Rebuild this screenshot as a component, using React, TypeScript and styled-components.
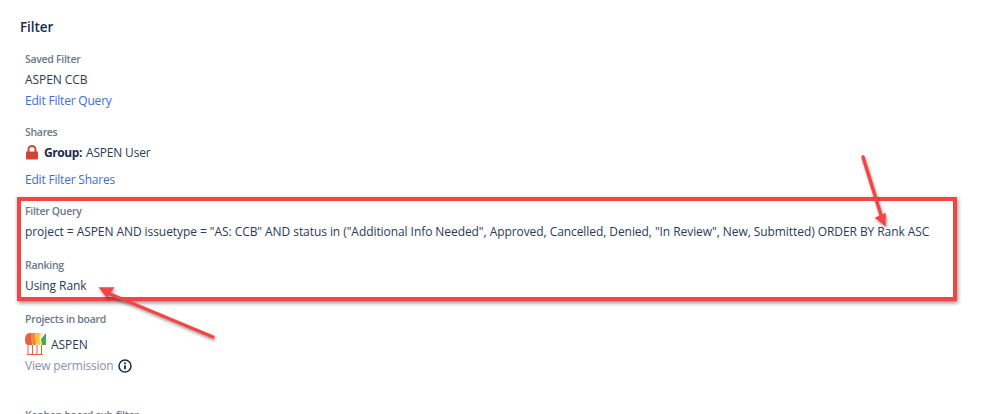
import * as React from 'react';
import styled, { createGlobalStyle } from 'styled-components';

const GlobalStyle = createGlobalStyle`
  html, body {
    background: #fff;
    height: 414px;
    margin: 0;
    overflow: hidden;
  }
`;

const Page = styled.div`
  box-sizing: border-box;
  color: #2b3a55;
  font-family: 'Open Sans', sans-serif;
  font-size: 12px;
  height: 414px;
  letter-spacing: -0.07px;
  overflow: hidden;
  padding: 18px 0 0 20px;
  position: relative;
  width: 998px;
`;

const Title = styled.h3`
  color: #172b4d;
  font-size: 13.5px;
  font-weight: 600;
  line-height: 18px;
  margin: 0 0 16px;
`;

const Section = styled.div<{ $gap?: number }>`
  margin-bottom: ${props => props.$gap ?? 14}px;
  padding-left: 5px;
`;

const Label = styled.div`
  color: #6b778c;
  font-size: 10.5px;
  font-weight: 600;
  letter-spacing: -0.3px;
  line-height: 14px;
  margin-bottom: 3px;
`;

const Value = styled.div`
  line-height: 21px;
`;

const EditLink = styled.a<{ $top?: number }>`
  color: #3b6fd4;
  display: block;
  letter-spacing: -0.2px;
  line-height: 21px;
  margin-top: ${props => props.$top ?? 0}px;
`;

const ShareRow = styled.div`
  align-items: center;
  display: flex;
  gap: 5px;
  letter-spacing: -0.2px;
  line-height: 21px;
`;

const Strong = styled.b`
  color: #172b4d;
  font-weight: 700;
  letter-spacing: -0.4px;
  margin-right: 4px;
`;

const Highlight = styled.div`
  border: 4px solid #f44545;
  box-shadow: 1px 2px 4px rgba(0, 0, 0, 0.45);
  box-sizing: border-box;
  height: 104px;
  margin: 0 0 11px -3px;
  padding: 3px 0 0 4px;
  width: 940px;
`;

const HighlightRow = styled.div`
  margin-bottom: 16px;
`;

const ProjectRow = styled.div`
  align-items: center;
  display: flex;
  gap: 4px;
  height: 24px;
  margin-top: 6px;
`;

const PermissionRow = styled.div`
  align-items: center;
  color: #8a93a3;
  display: flex;
  gap: 4px;
  letter-spacing: -0.2px;
  line-height: 20px;
`;

const Overlay = styled.svg`
  height: 414px;
  left: 0;
  pointer-events: none;
  position: absolute;
  top: 0;
  width: 998px;
`;

const LockIcon = () => (
  <svg width="14" height="15" viewBox="0 0 14 15">
    <path d="M3.500 7 V4.500 a3.500 3.500 0 0 1 7 0 V7" fill="none" stroke="#d04437" strokeWidth="2" />
    <rect x="1" y="6.500" width="12" height="8" rx="1" fill="#d04437" />
  </svg>
);

const ProjectLogo = () => (
  <svg width="22" height="24" viewBox="0 0 22 24">
    <path d="M0 8 C0 3 2 1 5 1 H7 V13 H4 C1 13 0 11 0 8Z" fill="#e8603c" />
    <path d="M6 1 h5 L11 13 H8 C6 11 6 6 6 1Z" fill="#f08a3e" />
    <path d="M10 1 h5 L15 13 H13 C10 11 10 6 10 1Z" fill="#f9c440" />
    <path d="M15 1 h2 C15 5 15 9 17 13 h-2 C14 9 14 5 15 1Z" fill="#f3e27a" />
    <path d="M16 7 L21 1 V13 H17 Z" fill="#4aa84c" />
    <path d="M3 13 V22 M7.500 13 V22 M12 13 V22 M16.500 13 V22 M2 22.500 H18" stroke="#e8603c" strokeWidth="1" fill="none" />
  </svg>
);

const InfoIcon = () => (
  <svg width="14" height="14" viewBox="0 0 14 14">
    <circle cx="7" cy="7" r="6" fill="none" stroke="#172b4d" strokeWidth="1.500" />
    <circle cx="7" cy="4.300" r="1" fill="#172b4d" />
    <path d="M7 6.200 V10.300" stroke="#172b4d" strokeWidth="1.800" />
  </svg>
);

const App = () => {
  return (
    <Page>
      <GlobalStyle />
      <Title>Filter</Title>
      <Section>
        <Label>Saved Filter</Label>
        <Value>ASPEN CCB</Value>
        <EditLink>Edit Filter Query</EditLink>
      </Section>
      <Section $gap={7}>
        <Label>Shares</Label>
        <ShareRow>
          <LockIcon />
          <span>
            <Strong>Group:</Strong>ASPEN User
          </span>
        </ShareRow>
        <EditLink $top={6}>Edit Filter Shares</EditLink>
      </Section>
      <Highlight>
        <HighlightRow>
          <Label>Filter Query</Label>
          <Value>
            project = ASPEN AND issuetype = "AS: CCB" AND status in ("Additional Info Needed", Approved, Cancelled, Denied, "In Review", New, Submitted) ORDER BY Rank ASC
          </Value>
        </HighlightRow>
        <div>
          <Label>Ranking</Label>
          <Value>Using Rank</Value>
        </div>
      </Highlight>
      <Section $gap={32}>
        <Label>Projects in board</Label>
        <ProjectRow>
          <ProjectLogo />
          ASPEN
        </ProjectRow>
        <PermissionRow>
          View permission
          <InfoIcon />
        </PermissionRow>
      </Section>
      <Section>
        <Label>Kanban board sub-filter</Label>
      </Section>
      <Overlay viewBox="0 0 998 414">
        <defs>
          <filter id="arrowShadow" x="-20%" y="-20%" width="140%" height="140%">
            <feDropShadow dx="1" dy="2" stdDeviation="1.500" floodColor="#000" floodOpacity="0.4" />
          </filter>
        </defs>
        <g filter="url(#arrowShadow)" fill="#f44545" stroke="#f44545">
          <path d="M863 157 L881 215" strokeWidth="3.500" strokeLinecap="round" />
          <path d="M885 225 L876 218 L885 214 Z" strokeWidth="1.500" />
          <path d="M213 337 L110 294" strokeWidth="3.500" strokeLinecap="round" />
          <path d="M100 288 L113 288 L107 297 Z" strokeWidth="1.500" />
        </g>
      </Overlay>
    </Page>
  );
};

export default App;
